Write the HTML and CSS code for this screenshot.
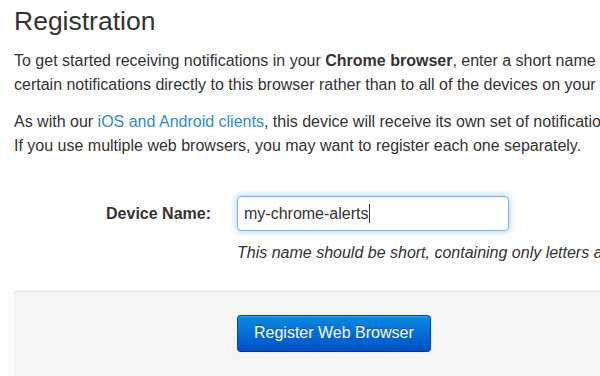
FILE: index.html
```html
<!DOCTYPE html>
<html lang="en">
<head>
<meta charset="utf-8">
<title>Registration</title>
<link rel="stylesheet" href="styles.css">
</head>
<body>
<div class="page">
  <h1 class="title">Registration</h1>
  <p class="para">To get started receiving notifications in your <strong>Chrome browser</strong>, enter a short name for this device below. This lets you send<br>certain notifications directly to this browser rather than to all of the devices on your account.</p>
  <p class="para">As with our <a class="link" href="#">iOS and Android clients</a>, this device will receive its own set of notification settings.<br>If you use multiple web browsers, you may want to register each one separately.</p>
  <div class="form-row">
    <label class="label">Device Name:</label>
    <div class="controls">
      <div class="input">my-chrome-alerts<span class="caret"></span></div>
      <p class="help">This name should be short, containing only letters and numbers.</p>
    </div>
  </div>
  <div class="actions">
    <div class="controls">
      <button class="btn-primary" type="button">Register Web Browser</button>
    </div>
  </div>
</div>
</body>
</html>
```

FILE: styles.css
```css
html, body {
  margin: 0;
  padding: 0;
  background: #ffffff;
  overflow: hidden;
}
body {
  width: 600px;
  height: 376px;
  font-family: "Liberation Sans", Arial, sans-serif;
  color: #333333;
}
.page {
  width: 1000px;
  padding-left: 14px;
  padding-top: 6px;
}
.title {
  margin: 0 0 12.5px 0;
  font-size: 26.5px;
  line-height: 30px;
  font-weight: normal;
  color: #333333;
}
.para {
  margin: 0 0 13px 0;
  font-size: 16px;
  line-height: 24px;
  white-space: nowrap;
}
.para strong {
  font-weight: bold;
}
.link {
  color: #2e8bcf;
  text-decoration: none;
}
.form-row {
  display: grid;
  grid-template-columns: 197px 1fr;
  column-gap: 26px;
  margin-top: 38px;
}
.label {
  text-align: right;
  font-weight: bold;
  font-size: 16px;
  line-height: 35px;
  color: #333333;
}
.controls {
  display: flex;
  flex-direction: column;
  align-items: flex-start;
}
.input {
  box-sizing: border-box;
  width: 272px;
  height: 35px;
  padding: 0 6px;
  border: 1px solid rgba(82, 168, 236, 0.8);
  border-radius: 4px;
  box-shadow: inset 0 1px 1px rgba(0, 0, 0, 0.075), 0 0 7px rgba(82, 168, 236, 0.6);
  font-size: 16px;
  line-height: 33px;
  color: #333333;
  display: flex;
  align-items: center;
}
.caret {
  display: inline-block;
  width: 1px;
  height: 19px;
  margin-left: 1px;
  background: #333333;
}
.help {
  margin: 10px 0 0 0;
  font-size: 16px;
  line-height: 24px;
  font-style: italic;
  white-space: nowrap;
  color: #333333;
}
.actions {
  display: grid;
  grid-template-columns: 197px 1fr;
  column-gap: 26px;
  margin-top: 26px;
  padding-top: 23px;
  height: 100px;
  background: #f5f5f5;
  border-top: 1px solid #e5e5e5;
}
.actions .controls {
  grid-column: 2;
}
.btn-primary {
  box-sizing: border-box;
  height: 37px;
  padding: 0 16px;
  font-family: "Liberation Sans", Arial, sans-serif;
  font-size: 16px;
  color: #ffffff;
  text-shadow: 0 -1px 0 rgba(0, 0, 0, 0.25);
  background: linear-gradient(#0a8ae0, #0050c6);
  border: 1px solid #0046b0;
  border-bottom-color: #003a96;
  border-radius: 4px;
  box-shadow: inset 0 1px 0 rgba(255, 255, 255, 0.2), 0 1px 2px rgba(0, 0, 0, 0.05);
  cursor: pointer;
}
```
